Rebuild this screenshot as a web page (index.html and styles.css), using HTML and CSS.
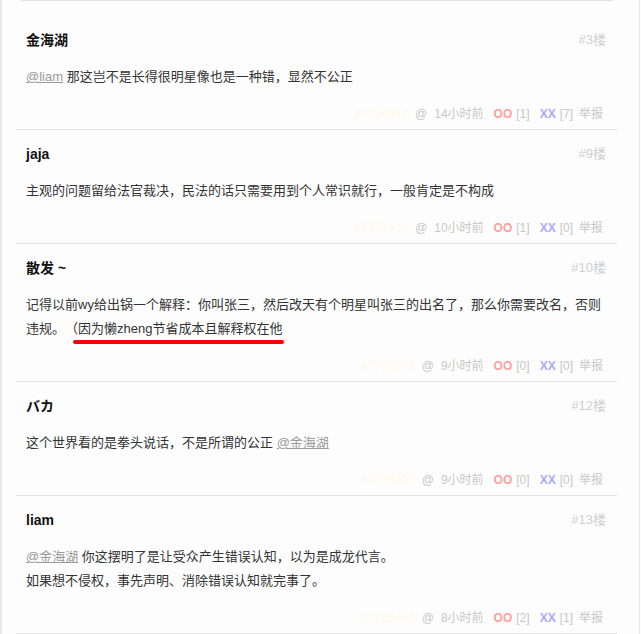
FILE: index.html
```html
<!DOCTYPE html>
<html lang="zh">
<head>
<meta charset="utf-8">
<title>评论</title>
<link rel="stylesheet" href="styles.css">
</head>
<body>
<div class="page">
  <div class="top-line"></div>
  <ol class="comments">
    <li class="comment">
      <div class="head"><b class="author">金海湖</b><span class="floor">#3楼</span></div>
      <p class="text"><a class="mention" href="#">@liam</a> 那这岂不是长得很明星像也是一种错，显然不公正</p>
      <div class="meta">
        <span class="cid">#7724347</span>
        <a class="at" href="#">@</a>
        <span class="time">14小时前</span>
        <a class="vote oo" href="#">OO</a><span class="count">[1]</span>
        <a class="vote xx" href="#">XX</a><span class="count">[7]</span>
        <a class="report" href="#">举报</a>
      </div>
    </li>
    <li class="comment">
      <div class="head"><b class="author">jaja</b><span class="floor">#9楼</span></div>
      <p class="text">主观的问题留给法官裁决，民法的话只需要用到个人常识就行，一般肯定是不构成</p>
      <div class="meta">
        <span class="cid">#7724401</span>
        <a class="at" href="#">@</a>
        <span class="time">10小时前</span>
        <a class="vote oo" href="#">OO</a><span class="count">[1]</span>
        <a class="vote xx" href="#">XX</a><span class="count">[0]</span>
        <a class="report" href="#">举报</a>
      </div>
    </li>
    <li class="comment">
      <div class="head"><b class="author">散发 ~</b><span class="floor">#10楼</span></div>
      <p class="text">记得以前wy给出锅一个解释：你叫张三，然后改天有个明星叫张三的出名了，那么你需要改名，否则违规。<span class="mark">（因为懒zheng节省成本且解释权在他</span></p>
      <div class="meta">
        <span class="cid">#7725273</span>
        <a class="at" href="#">@</a>
        <span class="time">9小时前</span>
        <a class="vote oo" href="#">OO</a><span class="count">[0]</span>
        <a class="vote xx" href="#">XX</a><span class="count">[0]</span>
        <a class="report" href="#">举报</a>
      </div>
    </li>
    <li class="comment">
      <div class="head"><b class="author">バカ</b><span class="floor">#12楼</span></div>
      <p class="text">这个世界看的是拳头说话，不是所谓的公正 <a class="mention" href="#">@金海湖</a></p>
      <div class="meta">
        <span class="cid">#7725303</span>
        <a class="at" href="#">@</a>
        <span class="time">9小时前</span>
        <a class="vote oo" href="#">OO</a><span class="count">[0]</span>
        <a class="vote xx" href="#">XX</a><span class="count">[0]</span>
        <a class="report" href="#">举报</a>
      </div>
    </li>
    <li class="comment">
      <div class="head"><b class="author">liam</b><span class="floor">#13楼</span></div>
      <p class="text"><a class="mention" href="#">@金海湖</a> 你这摆明了是让受众产生错误认知，以为是成龙代言。<br>如果想不侵权，事先声明、消除错误认知就完事了。</p>
      <div class="meta">
        <span class="cid">#7725400</span>
        <a class="at" href="#">@</a>
        <span class="time">8小时前</span>
        <a class="vote oo" href="#">OO</a><span class="count">[2]</span>
        <a class="vote xx" href="#">XX</a><span class="count">[1]</span>
        <a class="report" href="#">举报</a>
      </div>
    </li>
  </ol>
</div>
</body>
</html>
```

FILE: styles.css
```css
html, body {
  margin: 0;
  padding: 0;
  background: #fdfdfd;
}

body {
  font-family: "Liberation Sans", "Noto Sans CJK SC", sans-serif;
  color: #333;
  width: 641px;
  height: 634px;
  overflow: hidden;
  text-spacing-trim: space-all;
}

.page {
  box-sizing: border-box;
  width: 640px;
  height: 634px;
  border-left: 2px solid #e8e8e8;
  border-right: 1px solid #e8e8e8;
  background: #fdfdfd;
}

.top-line {
  height: 1px;
  margin: 0 26px 0 19px;
  background: #e2e2e2;
}

.comments {
  list-style: none;
  margin: 15px 0 0 14px;
  padding: 0;
  width: 601px;
}

.comment {
  padding: 14px 11px 5px 10px;
  border-bottom: 1px solid #e2e2e2;
}

.head {
  display: flex;
  justify-content: space-between;
  align-items: center;
  height: 20px;
  line-height: 20px;
}

.author {
  font-size: 14px;
  font-weight: bold;
  color: #111;
}

.floor {
  font-size: 13px;
  color: #cfcfcf;
}

.text {
  margin: 15px 0 0;
  font-size: 13px;
  line-height: 24px;
  color: #333;
  text-spacing-trim: space-all;
}

.mention {
  color: #9a9a9a;
  text-decoration: underline;
}

.mark {
  position: relative;
}

.mark::after {
  content: "";
  position: absolute;
  left: 8px;
  right: -2px;
  bottom: -8px;
  height: 4px;
  border-radius: 2px;
  background: #f00;
}

.meta {
  margin-top: 15px;
  padding-right: 3px;
  display: flex;
  justify-content: flex-end;
  align-items: center;
  height: 20px;
  line-height: 20px;
  font-size: 12px;
  color: #c8c8c8;
}

.meta a {
  text-decoration: none;
  color: #c8c8c8;
}

.cid {
  color: #fcfae6;
}

.meta .at {
  margin-left: 7px;
}

.time {
  margin-left: 7px;
}

.meta .vote {
  font-weight: bold;
}

.meta .oo {
  margin-left: 10px;
  color: #ff9f9f;
}

.meta .xx {
  margin-left: 10px;
  color: #a9a9ff;
}

.count {
  margin-left: 4px;
}

.meta .report {
  margin-left: 6px;
}
```
